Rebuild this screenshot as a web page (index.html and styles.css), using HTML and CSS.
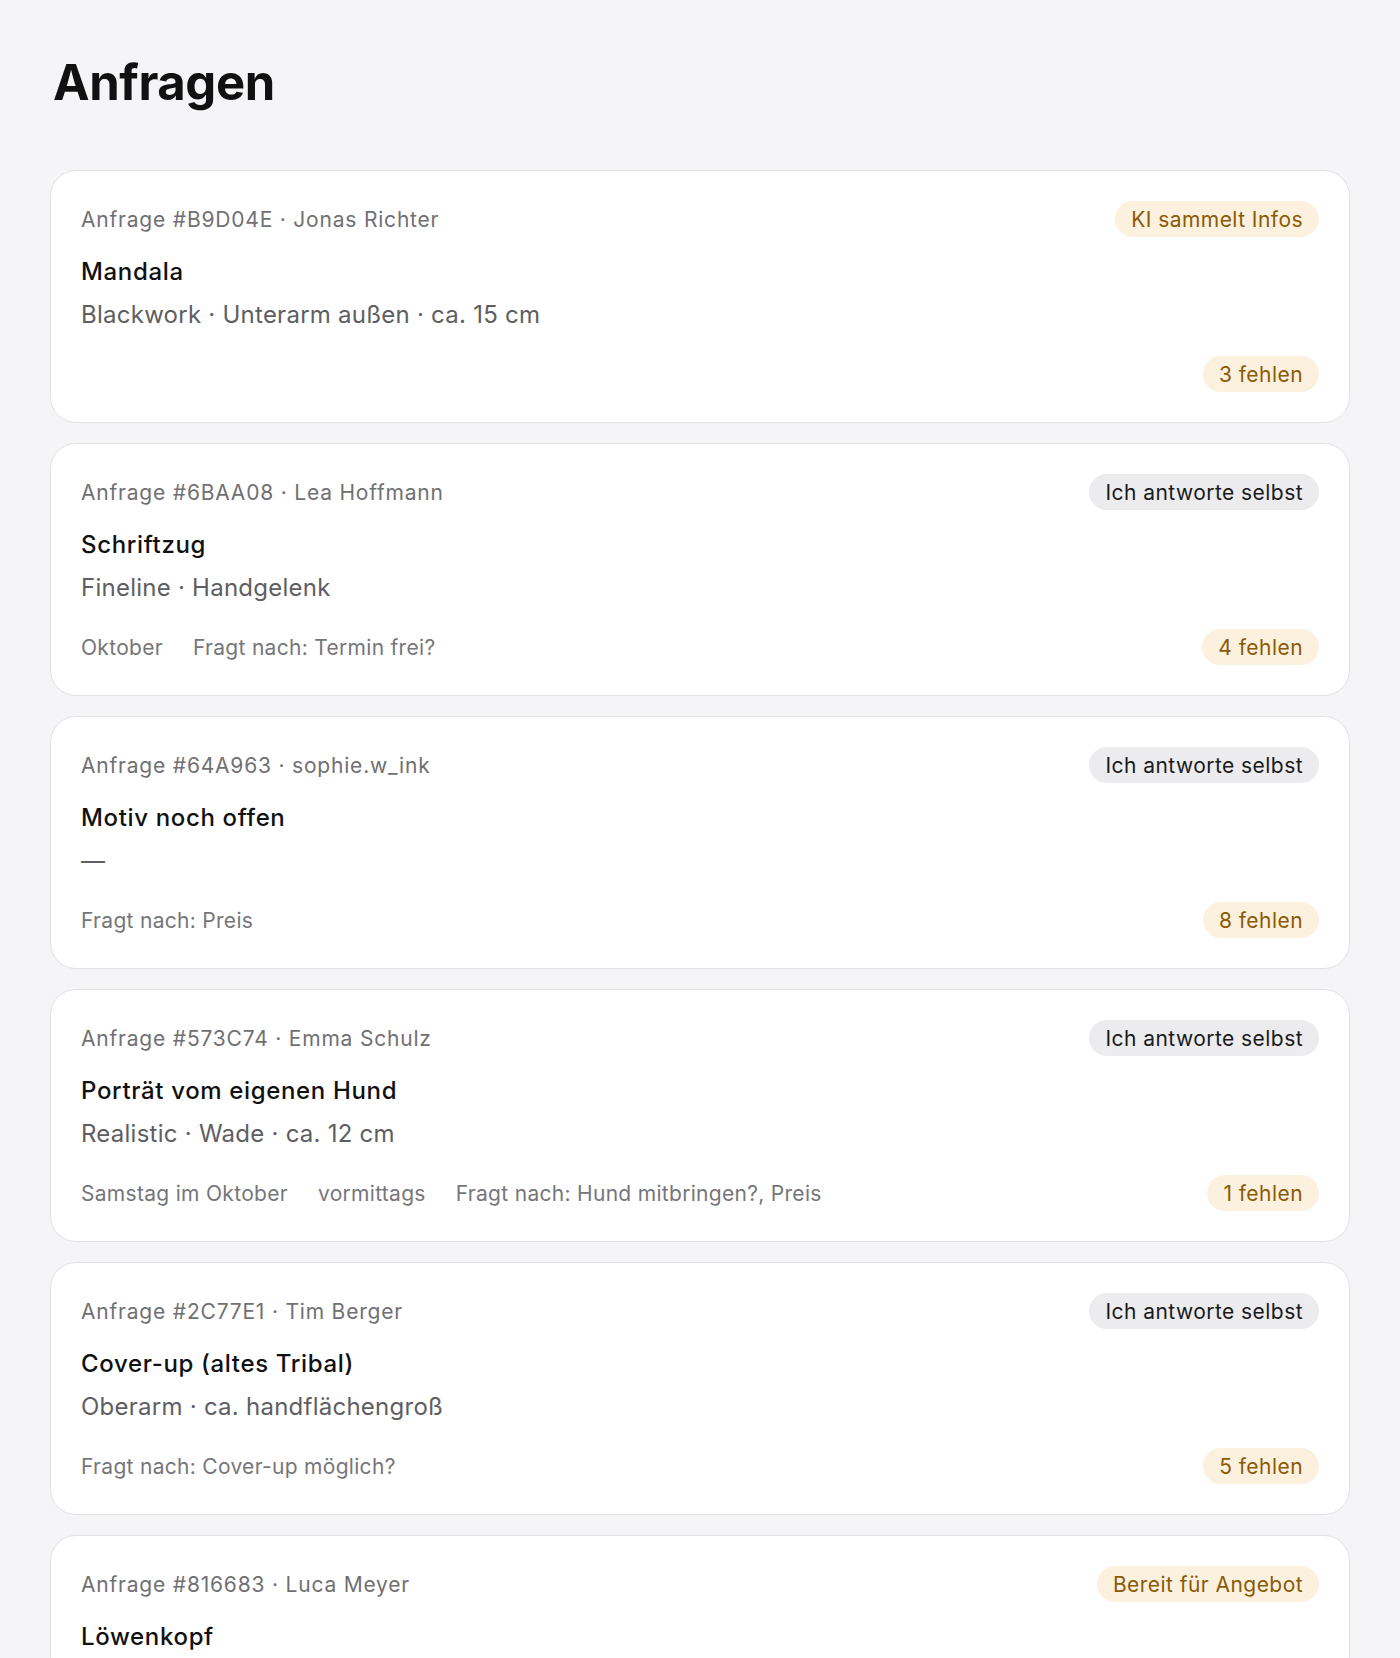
FILE: index.html
```html
<!DOCTYPE html>
<html lang="de">
<head>
<meta charset="utf-8">
<title>Anfragen</title>
<link rel="stylesheet" href="styles.css">
</head>
<body>
<main class="page">
  <h1 class="page-title">Anfragen</h1>
  <div class="list">
    <article class="card">
      <div class="card-head">
        <span class="meta">Anfrage #B9D04E · Jonas Richter</span>
        <span class="badge badge-amber">KI sammelt Infos</span>
      </div>
      <h2 class="card-title">Mandala</h2>
      <p class="card-sub">Blackwork · Unterarm außen · ca. 15 cm</p>
      <div class="card-foot">
        <div class="foot-items"></div>
        <span class="badge badge-amber">3 fehlen</span>
      </div>
    </article>
    <article class="card">
      <div class="card-head">
        <span class="meta">Anfrage #6BAA08 · Lea Hoffmann</span>
        <span class="badge badge-gray">Ich antworte selbst</span>
      </div>
      <h2 class="card-title">Schriftzug</h2>
      <p class="card-sub">Fineline · Handgelenk</p>
      <div class="card-foot">
        <div class="foot-items"><span>Oktober</span><span>Fragt nach: Termin frei?</span></div>
        <span class="badge badge-amber">4 fehlen</span>
      </div>
    </article>
    <article class="card">
      <div class="card-head">
        <span class="meta">Anfrage #64A963 · sophie.w_ink</span>
        <span class="badge badge-gray">Ich antworte selbst</span>
      </div>
      <h2 class="card-title">Motiv noch offen</h2>
      <p class="card-sub">—</p>
      <div class="card-foot">
        <div class="foot-items"><span>Fragt nach: Preis</span></div>
        <span class="badge badge-amber">8 fehlen</span>
      </div>
    </article>
    <article class="card">
      <div class="card-head">
        <span class="meta">Anfrage #573C74 · Emma Schulz</span>
        <span class="badge badge-gray">Ich antworte selbst</span>
      </div>
      <h2 class="card-title">Porträt vom eigenen Hund</h2>
      <p class="card-sub">Realistic · Wade · ca. 12 cm</p>
      <div class="card-foot">
        <div class="foot-items"><span>Samstag im Oktober</span><span>vormittags</span><span>Fragt nach: Hund mitbringen?, Preis</span></div>
        <span class="badge badge-amber">1 fehlen</span>
      </div>
    </article>
    <article class="card">
      <div class="card-head">
        <span class="meta">Anfrage #2C77E1 · Tim Berger</span>
        <span class="badge badge-gray">Ich antworte selbst</span>
      </div>
      <h2 class="card-title">Cover-up (altes Tribal)</h2>
      <p class="card-sub">Oberarm · ca. handflächengroß</p>
      <div class="card-foot">
        <div class="foot-items"><span>Fragt nach: Cover-up möglich?</span></div>
        <span class="badge badge-amber">5 fehlen</span>
      </div>
    </article>
    <article class="card">
      <div class="card-head">
        <span class="meta">Anfrage #816683 · Luca Meyer</span>
        <span class="badge badge-amber">Bereit für Angebot</span>
      </div>
      <h2 class="card-title">Löwenkopf</h2>
    </article>
  </div>
</main>
</body>
</html>
```

FILE: styles.css
```css
* { box-sizing: border-box; }
html, body { margin: 0; padding: 0; }
body {
  background: #f5f5f7;
  font-family: Inter, "Noto Sans", "Liberation Sans", sans-serif;
  color: #111;
}
.page {
  padding: 50px 50px 40px 50px;
}
.page-title {
  margin: 0 0 0 3px;
  font-size: 49px;
  line-height: 66px;
  font-weight: 700;
  letter-spacing: -0.4px;
  color: #111;
}
.list {
  margin-top: 54px;
  display: flex;
  flex-direction: column;
  gap: 20px;
}
.card {
  background: #fff;
  border: 1.5px solid #e2e2e5;
  border-radius: 26px;
  padding: 30px;
  display: flex;
  flex-direction: column;
}
.card-head {
  display: flex;
  align-items: center;
  justify-content: space-between;
  height: 36px;
}
.meta {
  font-size: 21px;
  color: #707073;
  letter-spacing: 0.8px;
}
.badge {
  display: inline-flex;
  align-items: center;
  height: 36px;
  padding: 0 16px;
  border-radius: 18px;
  font-size: 21px;
  letter-spacing: 0.45px;
  white-space: nowrap;
}
.badge-amber { background: #fcf1de; color: #8a5a06; }
.badge-gray { background: #ececef; color: #1a1a1c; }
.card-title {
  margin: 19px 0 0 0;
  font-size: 24px;
  line-height: 31px;
  font-weight: 500;
  letter-spacing: 0.65px;
  color: #111;
}
.card-sub {
  margin: 12px 0 0 0;
  font-size: 24px;
  line-height: 31px;
  letter-spacing: 0.25px;
  color: #5e5e62;
}
.card-foot {
  margin-top: 26px;
  display: flex;
  align-items: center;
  justify-content: space-between;
  height: 36px;
}
.foot-items {
  display: flex;
  gap: 30px;
  font-size: 21px;
  letter-spacing: 0.3px;
  color: #76767a;
}
```
